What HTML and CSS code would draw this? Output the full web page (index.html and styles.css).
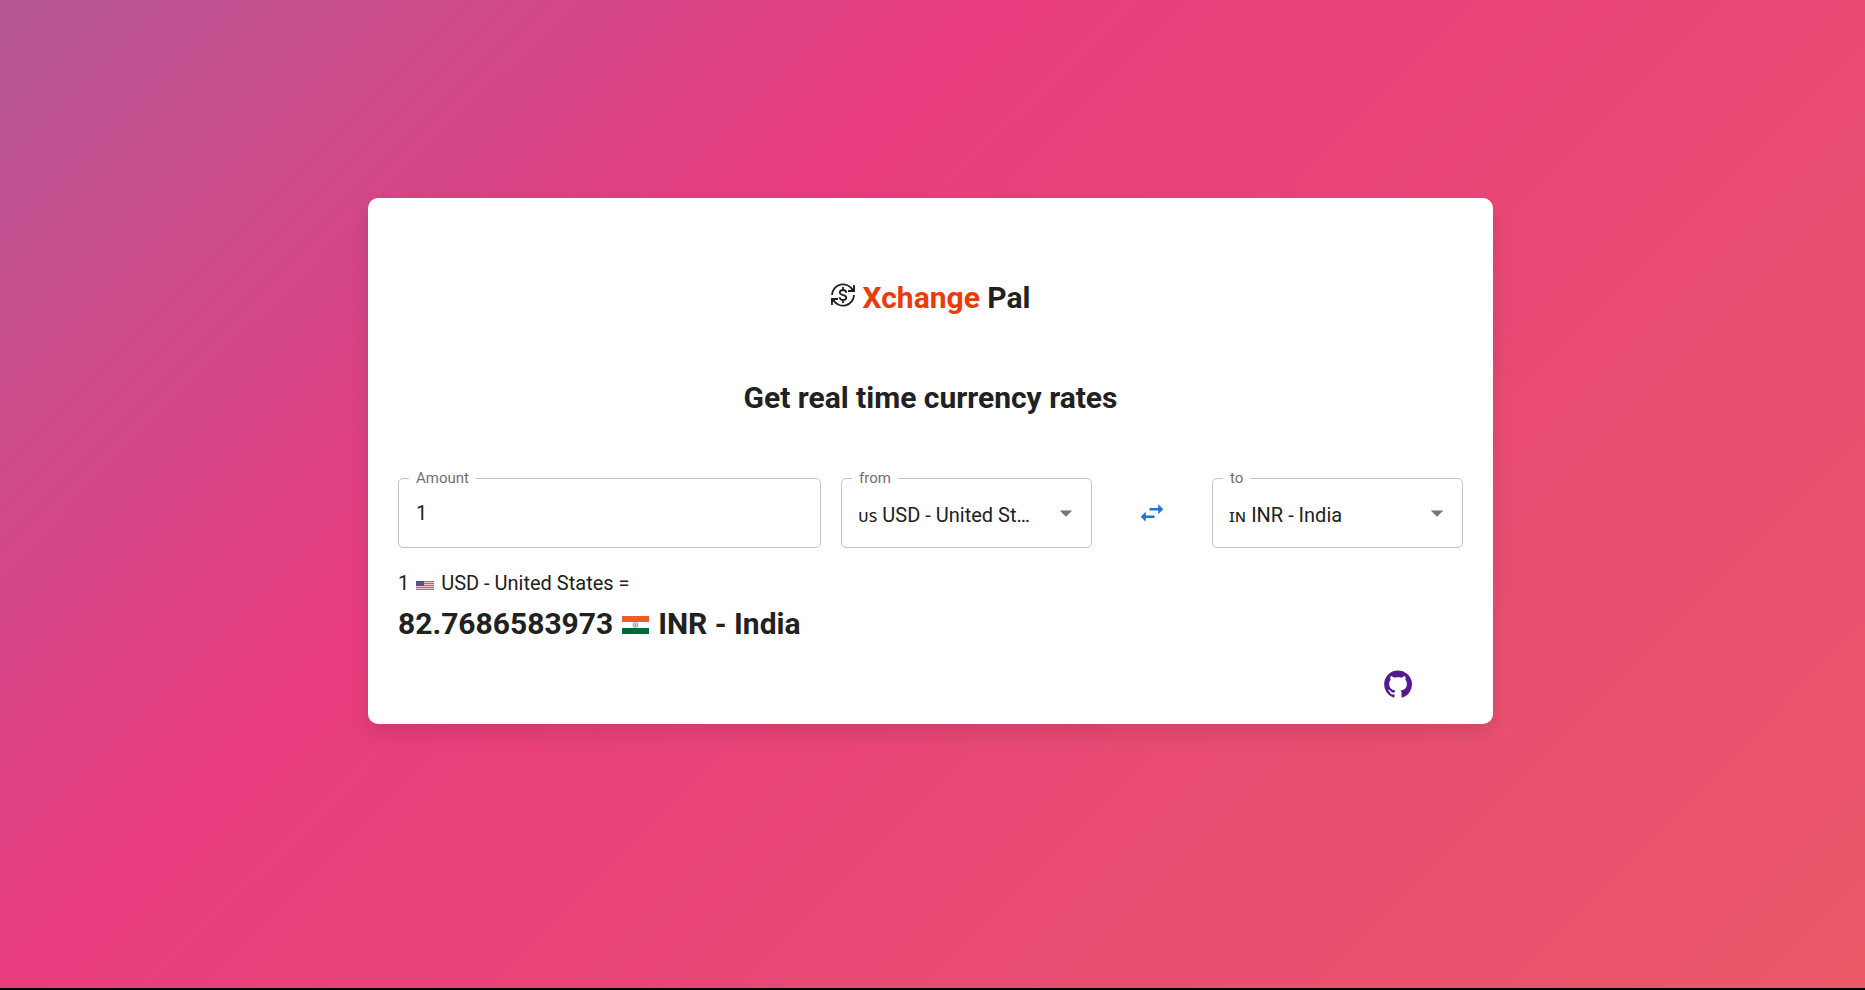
FILE: index.html
```html
<!DOCTYPE html>
<html lang="en">
<head>
  <meta charset="utf-8">
  <title>Xchange Pal</title>
  <link rel="stylesheet" href="styles.css">
</head>
<body>
  <main class="page">
    <section class="card">
      <h1 class="brand">
        <svg class="brand-icon" viewBox="0 0 24 24" fill="none" stroke="currentColor" stroke-width="1.800" aria-hidden="true">
          <path d="M1 12A11 11 0 0 1 21.600 7"/>
          <path d="M23 12A11 11 0 0 1 2.400 17"/>
          <path d="M23 2v6h-6M1 22v-6h6"/>
          <path fill="currentColor" stroke="none" d="M24 3v6h-6zM0 21v-6h6z"/>
          <path d="M12 4v3M12 17v3M15.200 9.800C15.200 8 13.900 7 12 7S8.800 8 8.800 9.600c0 3.400 6.500 1.600 6.500 4.900 0 1.500-1.500 2.500-3.300 2.500s-3.300-1-3.300-2.800"/>
        </svg>
        <span><span class="accent">Xchange</span> Pal</span>
      </h1>
      <h2 class="tagline">Get real time currency rates</h2>

      <form class="converter">
        <fieldset class="field">
          <legend><label for="amount">Amount</label></legend>
          <input id="amount" class="control" type="text" inputmode="decimal" value="1">
        </fieldset>
        <fieldset class="field field-select">
          <legend><label for="from">from</label></legend>
          <span class="code">ᴜs</span>
          <select id="from" class="control">
            <option>USD - United States</option>
            <option>INR - India</option>
          </select>
          <svg class="caret" viewBox="0 0 24 24" aria-hidden="true"><path d="m7 10 5 5 5-5z"/></svg>
        </fieldset>
        <button class="swap" type="button" aria-label="Swap currencies">
          <svg viewBox="0 0 24 24" aria-hidden="true"><path d="M6.990 11 3 15l3.990 4v-3H14v-2H6.990v-3zM21 9l-3.990-4v3H10v2h7.010v3L21 9z"/></svg>
        </button>
        <fieldset class="field field-select">
          <legend><label for="to">to</label></legend>
          <span class="code">ɪɴ</span>
          <select id="to" class="control">
            <option>INR - India</option>
            <option>USD - United States</option>
          </select>
          <svg class="caret" viewBox="0 0 24 24" aria-hidden="true"><path d="m7 10 5 5 5-5z"/></svg>
        </fieldset>
      </form>

      <p class="source">1
        <svg class="flag-small" viewBox="0 0 18 9" preserveAspectRatio="none" aria-hidden="true">
          <path fill="#f0c5cb" d="M0 0h18v9H0z"/>
          <path stroke="#cf5b6b" stroke-width="1" d="M0 .5h18M0 2.500h18M0 4.500h18M0 6.500h18M0 8.500h18"/>
          <path fill="#4b4b80" d="M0 0h8v5H0z"/>
          <path stroke="#8585ab" stroke-width=".6" stroke-dasharray=".6 1" d="M.6 1.200h7M.6 2.600h7M.6 4h7"/>
        </svg>
        USD - United States =</p>
      <p class="result">82.7686583973
        <svg class="flag-large" viewBox="0 0 27 18" aria-hidden="true">
          <path fill="#f15b25" d="M0 0h27v6H0z"/>
          <path fill="#fff" d="M0 6h27v6H0z"/>
          <path fill="#026a37" d="M0 12h27v6H0z"/>
          <circle cx="13.500" cy="9" r="2.600" fill="#dcdcec" stroke="#8080b4" stroke-width=".7"/>
          <circle cx="13.500" cy="9" r=".8" fill="#5c5ca0"/>
        </svg>
        INR - India</p>

      <footer class="footer">
        <a class="github" href="#" aria-label="GitHub">
          <svg viewBox="0 0 24 24" aria-hidden="true"><path d="M12 1.270a11 11 0 00-3.480 21.460c.55.09.73-.28.73-.55v-1.840c-3.030.64-3.670-1.460-3.670-1.460-.55-1.290-1.280-1.650-1.280-1.650-.92-.65.1-.65.1-.65 1.100 0 1.730 1.100 1.730 1.100.92 1.650 2.570 1.200 3.210.92a2 2 0 01.64-1.470c-2.470-.27-5.040-1.190-5.040-5.500 0-1.100.46-2.100 1.200-2.840a3.760 3.760 0 010-2.930s.91-.28 3.110 1.100c1.800-.49 3.700-.49 5.500 0 2.100-1.380 3.020-1.100 3.020-1.100a3.760 3.760 0 01.1 2.930c.83.74 1.200 1.740 1.200 2.940 0 4.210-2.570 5.130-5.040 5.400.45.37.82.92.82 2.020v3.030c0 .27.1.64.73.55A11 11 0 0012 1.270"/></svg>
        </a>
      </footer>
    </section>
  </main>
</body>
</html>
```
FILE: styles.css
```css
* {
  box-sizing: border-box;
}

body {
  margin: 0;
  background: #000;
  color: #212121;
  font-family: Roboto, "Liberation Sans", sans-serif;
  font-size: 20px;
}

.page {
  display: flex;
  justify-content: center;
  align-items: flex-start;
  min-height: calc(100vh - 2px);
  padding: 198px 24px 24px 20px;
  background: linear-gradient(-45deg, #ee7752, #e73c7e, #23a6d5, #23d5ab);
  background-size: 400% 400%;
  background-position: 92% 50%;
}

.card {
  width: 100%;
  max-width: 1125px;
  padding: 80px 30px 25px;
  border-radius: 10px;
  background: #fff;
  box-shadow: 0 10px 20px rgba(0, 0, 0, 0.1);
}

.brand,
.tagline,
.result {
  margin: 0;
  font-size: 30px;
  font-weight: 700;
  line-height: 40px;
}

.brand {
  display: flex;
  justify-content: center;
  align-items: center;
  gap: 8px;
}

.brand-icon {
  width: 24px;
  height: 24px;
  margin-bottom: 6px;
}

.accent {
  color: #ec3a0a;
}

.tagline {
  margin-top: 60px;
  text-align: center;
}

.converter {
  display: grid;
  grid-template-columns: 423fr 251fr 80fr 251fr;
  gap: 20px;
  margin-top: 51px;
}

.field {
  display: flex;
  align-items: center;
  min-width: 0;
  height: 79px;
  margin: 0;
  padding: 0 10px 9px;
  border: 1px solid #c4c4c4;
  border-radius: 5px;
}

.field legend {
  padding: 0 7px;
  color: #707070;
  font-size: 15px;
  line-height: 18px;
}

.control {
  flex: 1;
  min-width: 0;
  height: 52px;
  padding: 0;
  border: 0;
  outline: 0;
  appearance: none;
  background: transparent;
  color: #212121;
  font: inherit;
  text-overflow: ellipsis;
}

input.control {
  padding-left: 7px;
}

.field-select .control,
.code {
  padding-top: 4px;
}

.field-select .control {
  margin-right: 14px;
}

.code {
  padding-right: 5px;
  padding-left: 6px;
  font-family: "Noto Sans", sans-serif;
  font-size: 18px;
}

.caret {
  width: 30px;
  height: 30px;
  fill: #757575;
}

.swap {
  display: grid;
  place-items: center;
  padding: 9px 0 0;
  border: 0;
  background: none;
  cursor: pointer;
}

.swap svg {
  width: 30px;
  height: 30px;
  fill: #1976d2;
}

.source {
  margin: 20px 0 0;
  line-height: 30px;
}

.result {
  margin-top: 6px;
}

.flag-small {
  width: 18px;
  height: 9px;
  margin: 0 2px;
}

.flag-large {
  width: 27px;
  height: 18px;
  margin: 0 2px 0 1px;
}

.footer {
  display: flex;
  justify-content: flex-end;
  margin-top: 25px;
  padding-right: 50px;
}

.github svg {
  display: block;
  width: 30px;
  height: 30px;
  fill: #551a8b;
}
```
